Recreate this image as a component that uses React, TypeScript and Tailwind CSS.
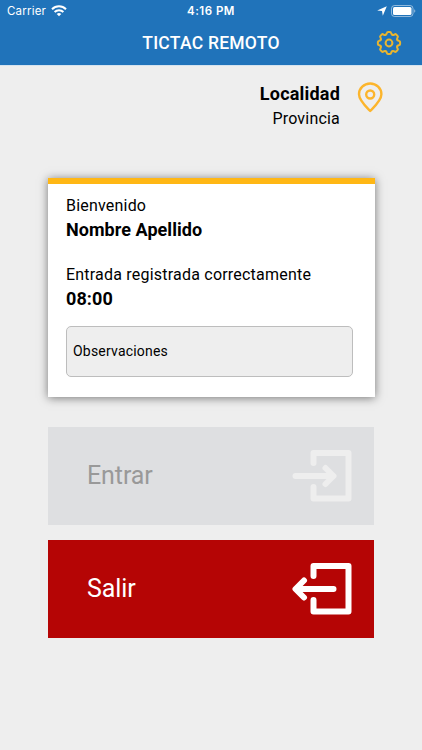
import { useState } from "react";

const TEETH = [0, 45, 90, 135, 180, 225, 270, 315];

export default function App() {
  const [notes, setNotes] = useState("");

  return (
    <div className="flex h-[750px] w-[422px] flex-col overflow-hidden bg-[#eeeeee] font-[Roboto,sans-serif] text-black">
      <header className="h-[65px] shrink-0 bg-[#2073ba] text-white">
        <StatusBar />
        <div className="grid h-[43px] grid-cols-[60px_1fr_60px] items-center">
          <span />
          <h1 className="-mt-0.5 text-center text-[17.5px] font-medium leading-5 tracking-[0.25px]">TICTAC REMOTO</h1>
          <button aria-label="Ajustes" className="-mt-px ml-[14px] w-[26px]">
            <GearIcon />
          </button>
        </div>
      </header>

      <main className="flex flex-col border-t border-[#d5e3ef]">
        <div className="flex h-[111.5px] justify-end gap-[17px] pr-[38px] pt-[15px]">
          <div className="text-right">
            <p className="text-[18px] font-bold leading-[25px] tracking-[0.2px]">Localidad</p>
            <p className="text-[16px] leading-[25px] tracking-[0.2px]">Provincia</p>
          </div>
          <PinIcon />
        </div>

        <section className="ml-12 h-[219.5px] w-[326.5px] border-t-[6px] border-[#ffb715] bg-white px-[18px] pt-[10px] shadow-[0_1px_9px_rgba(0,0,0,0.5)]">
          <p className="text-[16px] leading-6 tracking-[0.2px]">Bienvenido</p>
          <p className="text-[18px] font-bold leading-6 tracking-[0.05px]">Nombre Apellido</p>
          <p className="mt-[21px] text-[16px] leading-6 tracking-[0.21px]">Entrada registrada correctamente</p>
          <p className="text-[18px] font-bold leading-6 tracking-[0.1px]">08:00</p>
          <input
            value={notes}
            onChange={(e) => setNotes(e.target.value)}
            placeholder="Observaciones"
            className="mt-[15px] block h-[51px] w-[287px] rounded-[5px] border border-[#bdbdbd] bg-[#eeeeee] px-[6px] text-[14px] tracking-[0.2px] placeholder:text-black"
          />
        </section>

        <div className="ml-12 mt-[30px] flex w-[325.5px] flex-col gap-[15.5px]">
          <button disabled className="flex h-[97.5px] items-center justify-between bg-[#dedfe1] pl-[39px] pr-[22px] text-[25px] tracking-[-0.1px] text-[#999999]">
            Entrar
            <EnterIcon />
          </button>
          <button className="flex h-[97.5px] items-center justify-between bg-[#b50505] pl-[39px] pr-[22px] text-[25px] tracking-[-0.1px] text-white">
            Salir
            <ExitIcon />
          </button>
        </div>
      </main>
    </div>
  );
}

function StatusBar() {
  return (
    <div className="grid h-[22px] grid-cols-3 items-center font-[Inter,sans-serif] text-[11px] leading-[22px]">
      <div className="flex items-center gap-[5px] pl-[7px]">
        <span className="text-[11.5px] tracking-[0.2px]">Carrier</span>
        <svg width="16" height="12" viewBox="0 0 16 12" fill="none" stroke="currentColor" strokeWidth="2">
          <path d="M1 4.2a10 10 0 0 1 14 0M3.6 7a6.3 6.3 0 0 1 8.8 0" />
          <path d="M8 11.3 5.7 9a3.3 3.3 0 0 1 4.6 0z" fill="currentColor" stroke="none" />
        </svg>
      </div>
      <span className="text-center text-[11.5px] font-semibold tracking-[0.5px]">4:16 PM</span>
      <div className="flex items-center justify-end gap-1 pr-[6px]">
        <svg width="10" height="10" viewBox="0 0 10 10" fill="currentColor">
          <path d="M9.8.2 5.8 9.8 5 5 .2 4.5z" />
        </svg>
        <svg width="25" height="12" viewBox="0 0 25 12">
          <rect x=".5" y=".5" width="21.5" height="11" rx="3" fill="none" stroke="#fff" strokeOpacity=".5" />
          <rect x="2" y="2" width="18.5" height="8" rx="1.5" fill="#fff" />
          <path d="M23.2 4.2a2 2 0 0 1 0 3.6z" fill="#fff" fillOpacity=".5" />
        </svg>
      </div>
    </div>
  );
}

function GearIcon() {
  return (
    <svg width="26" height="26" viewBox="-13 -13 26 26" fill="none" stroke="#e9b52f" strokeWidth="2" strokeLinecap="round">
      {TEETH.map((angle) => (
        <path
          key={angle}
          transform={`rotate(${angle})`}
          d="M-3.4-8.2C-2.2-8.7-2.3-9.4-2.1-10.1Q-1.9-11.1-1-11.1H1Q1.9-11.1 2.1-10.1C2.3-9.4 2.2-8.7 3.4-8.2"
        />
      ))}
      <circle r="3.4" />
    </svg>
  );
}

function PinIcon() {
  return (
    <svg className="mt-px" width="27" height="31" viewBox="0 0 27 31" fill="none" stroke="#fcb52c" strokeWidth="2.4" strokeLinejoin="round">
      <path d="M13.2 29C9.5 25.2 2 18.5 2 12.3A11.2 10.8 0 0 1 24.4 12.3C24.4 18.5 16.9 25.2 13.2 29z" />
      <circle cx="13.2" cy="12.5" r="4" />
    </svg>
  );
}

function EnterIcon() {
  return (
    <svg width="60" height="54" viewBox="0 0 60 54" fill="none" stroke="#eeeeee" strokeWidth="6" strokeLinecap="round" strokeLinejoin="round">
      <path d="M21.500 14V4H56.500V49.500H21.500V38" />
      <path d="M3.500 27H40M33.500 19L41.500 27L33.500 35" />
    </svg>
  );
}

function ExitIcon() {
  return (
    <svg width="60" height="54" viewBox="0 0 60 54" fill="none" stroke="#fff" strokeWidth="6" strokeLinecap="round" strokeLinejoin="round">
      <path d="M21.500 14V4H56.500V49.500H21.500V38" />
      <path d="M41.500 27H4M12 18.500L3.500 27L12 35.500" />
    </svg>
  );
}
